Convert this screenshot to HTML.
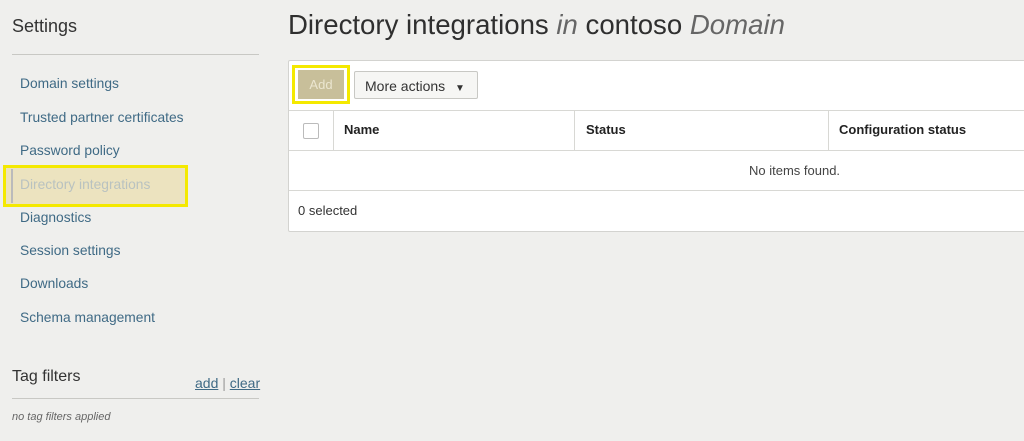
<!DOCTYPE html>
<html><head><meta charset="utf-8"><style>
body{margin:0;width:1024px;height:441px;background:#efefed;font-family:"Liberation Sans",sans-serif;position:relative;overflow:hidden}
.a{position:absolute;white-space:nowrap}
.lk{position:absolute;left:20px;font-size:13.8px;color:#3f6a85}
</style></head><body>
<div class="a" style="left:12px;top:16px;font-size:18px;color:#333">Settings</div>
<div class="a" style="left:12px;top:54px;width:247px;height:1px;background:#c8c8c4"></div>
<div class="lk" style="top:76px">Domain settings</div>
<div class="lk" style="top:110px">Trusted partner certificates</div>
<div class="lk" style="top:143px">Password policy</div>
<div class="a" style="left:3px;top:165px;width:179px;height:36px;border:3px solid #f4e900;background:#ece3bf"></div>
<div class="a" style="left:11px;top:169px;width:2px;height:34px;background:#bbb"></div>
<div class="lk" style="top:177px;color:#b9c2c0">Directory integrations</div>
<div class="lk" style="top:210px">Diagnostics</div>
<div class="lk" style="top:243px">Session settings</div>
<div class="lk" style="top:276px">Downloads</div>
<div class="lk" style="top:310px">Schema management</div>
<div class="a" style="left:12px;top:368px;font-size:16px;color:#333">Tag filters</div>
<div class="a" style="left:195px;top:375px;font-size:14px;color:#3f6a85"><u>add</u> <span style="color:#999">|</span> <u>clear</u></div>
<div class="a" style="left:12px;top:398px;width:247px;height:1px;background:#c8c8c4"></div>
<div class="a" style="left:12px;top:411px;font-size:11px;font-style:italic;color:#666">no tag filters applied</div>

<div class="a" style="left:288px;top:9px;font-size:27.6px;color:#2f2f2f">Directory integrations <i style="color:#666">in</i> contoso <i style="color:#666">Domain</i></div>
<div class="a" style="left:288px;top:60px;width:740px;height:170px;background:#fff;border:1px solid #d3d3d0;border-radius:2px"></div>
<div class="a" style="left:292px;top:65px;width:52px;height:33px;border:3px solid #f4e900"></div>
<div class="a" style="left:298px;top:70px;width:46px;height:29px;background:#c8bf9a;color:#ebe6d0;font-size:13px;text-align:center;line-height:29px">Add</div>
<div class="a" style="left:354px;top:71px;width:124px;height:28px;background:#f6f6f4;border:1px solid #c8c8c4;border-radius:2px;font-size:14px;color:#333;line-height:28px;padding-left:10px;box-sizing:border-box">More actions <span style="font-size:10px;margin-left:6px">▼</span></div>
<div class="a" style="left:289px;top:110px;width:740px;height:1px;background:#d8d8d4"></div>
<div class="a" style="left:289px;top:150px;width:740px;height:1px;background:#d8d8d4"></div>
<div class="a" style="left:289px;top:190px;width:740px;height:1px;background:#d8d8d4"></div>
<div class="a" style="left:333px;top:111px;width:1px;height:39px;background:#d8d8d4"></div>
<div class="a" style="left:574px;top:111px;width:1px;height:39px;background:#d8d8d4"></div>
<div class="a" style="left:828px;top:111px;width:1px;height:39px;background:#d8d8d4"></div>
<div class="a" style="left:303px;top:123px;width:14px;height:14px;border:1px solid #bbb;border-radius:2px;background:#fff"></div>
<div class="a" style="left:344px;top:122px;font-size:13px;font-weight:bold;color:#222">Name</div>
<div class="a" style="left:586px;top:122px;font-size:13px;font-weight:bold;color:#222">Status</div>
<div class="a" style="left:839px;top:122px;font-size:13px;font-weight:bold;color:#222">Configuration status</div>
<div class="a" style="left:749px;top:163px;font-size:13px;color:#444">No items found.</div>
<div class="a" style="left:298px;top:203px;font-size:13px;color:#333">0 selected</div>
</body></html>
